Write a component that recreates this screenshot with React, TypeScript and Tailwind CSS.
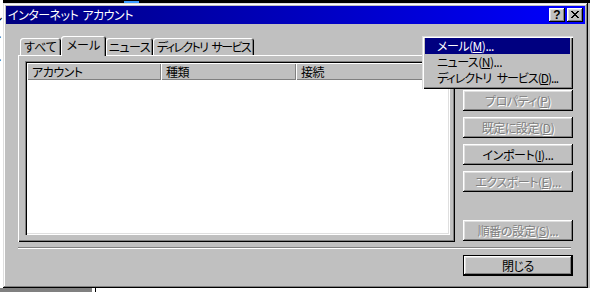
import React from "react";

const FONT = "font-['Noto_Sans_CJK_JP',sans-serif] [font-feature-settings:'palt'] whitespace-nowrap";
const RAISED =
  "shadow-[inset_-1px_-1px_#000,inset_1px_1px_#fff,inset_-2px_-2px_#808080,inset_2px_2px_#dfdfdf]";

function Btn({
  children,
  disabled,
  def,
  extra,
}: {
  children?: React.ReactNode;
  disabled?: boolean;
  def?: boolean;
  extra?: string;
}) {
  return (
    <div
      className={`flex h-[21px] w-[110px] shrink-0 items-center justify-center bg-[#c0c0c0] text-[12px] leading-none tracking-[-0.4px] ${RAISED} ${
        disabled ? "text-[#808080] [text-shadow:1px_1px_0_#fff]" : "text-black"
      } ${def ? "border border-black" : ""} ${extra ?? ""}`}
    >
      {children ? <span>{children}</span> : null}
    </div>
  );
}

function Tab({ children, w, selected }: { children: React.ReactNode; w: string; selected?: boolean }) {
  return (
    <div
      className={`flex shrink-0 items-center justify-center rounded-t-[3px] bg-[#c0c0c0] text-[12px] leading-none text-black shadow-[inset_1px_1px_#fff,inset_-1px_0_#000,inset_-2px_0_#808080] ${w} ${
        selected ? "relative z-10 -mb-px h-[20px] pb-[2px]" : "h-[17px]"
      }`}
    >
      <span>{children}</span>
    </div>
  );
}

function HeaderCell({ children, w }: { children: React.ReactNode; w: string }) {
  return (
    <div
      className={`flex h-full items-center bg-[#c0c0c0] pl-[5px] text-[12px] leading-none tracking-[-0.5px] text-black shadow-[inset_1px_1px_#fff,inset_-1px_-1px_#808080] ${w}`}
    >
      {children}
    </div>
  );
}

function CapBtn({ children }: { children: React.ReactNode }) {
  return (
    <div className={`flex h-[14px] w-[16px] items-center justify-center bg-[#c0c0c0] ${RAISED}`}>
      {children}
    </div>
  );
}

function U({ children }: { children: React.ReactNode }) {
  return <span className="underline underline-offset-[1px]">{children}</span>;
}

export default function App() {
  return (
    <div className={`relative flex h-[292px] w-[590px] flex-col overflow-hidden bg-white ${FONT}`}>
      {/* desktop strip above */}
      <div className="flex h-[3px] shrink-0">
        <div className="w-[3px] bg-white" />
        <div className="flex-1 bg-black">
          <div className="ml-[121px] mt-[1px] h-[2px] w-[15px] bg-[#3a9cff]" />
        </div>
      </div>

      <div className="flex h-[285px] shrink-0">
        {/* desktop strip at the left */}
        <div className="relative w-[3px] shrink-0 overflow-hidden bg-white text-[12px] leading-none text-black">
          <span className="absolute left-[-9px] top-[8px]">ル</span>
          <span className="absolute left-[-9px] top-[32px]">イ</span>
          <span className="absolute left-[-9px] top-[55px]">イ</span>
        </div>

        {/* dialog */}
        <div className="flex w-[585px] shrink-0 flex-col bg-[#c0c0c0] p-[3px] shadow-[inset_-1px_-1px_#000,inset_1px_1px_#dfdfdf,inset_-2px_-2px_#808080,inset_2px_2px_#fff]">
          <div className="flex h-[18px] shrink-0 items-center bg-linear-to-r from-[#000080] to-[#0000ff] pl-[2px] pr-[2px]">
            <span className="text-[12px] leading-none tracking-[-0.5px] text-white [word-spacing:2px]">
              インターネット アカウント
            </span>
            <div className="ml-auto flex gap-[2px]">
              <CapBtn>
                <span className="font-['Liberation_Sans',sans-serif] text-[12px] font-bold leading-none text-black">
                  ?
                </span>
              </CapBtn>
              <CapBtn>
                <svg width="8" height="7" viewBox="0 0 8 7" shapeRendering="crispEdges" className="-mt-px">
                  <path
                    d="M0 0h2v1H0zM6 0h2v1H6zM1 1h2v1H1zM5 1h2v1H5zM2 2h4v1H2zM3 3h2v1H3zM2 4h4v1H2zM1 5h2v1H1zM5 5h2v1H5zM0 6h2v1H0zM6 6h2v1H6z"
                    fill="#000"
                  />
                </svg>
              </CapBtn>
            </div>
          </div>

          <div className="flex pl-[12px]">
            {/* tabs + panel */}
            <div className="flex flex-col pt-[12px]">
              <div className="flex h-[19px] items-end pl-[2px]">
                <Tab w="w-[41px]">すべて</Tab>
                <Tab w="w-[45px]" selected>
                  メール
                </Tab>
                <Tab w="w-[47px]">
                  <span className="tracking-[-0.5px]">ニュース</span>
                </Tab>
                <Tab w="w-[101px]">
                  <span className="tracking-[-1.6px] [word-spacing:3px]">ディレクトリ サービス</span>
                </Tab>
              </div>
              <div className="h-[187px] w-[437px] bg-[#c0c0c0] pl-[7px] pt-[6px] shadow-[inset_1px_1px_#fff,inset_-1px_-1px_#000,inset_-2px_-2px_#808080]">
                <div className="flex h-[174px] w-[425px] flex-col bg-white p-[2px] shadow-[inset_1px_1px_#808080,inset_2px_2px_#000,inset_-1px_-1px_#fff,inset_-2px_-2px_#dfdfdf]">
                  <div className="flex h-[17px] shrink-0">
                    <HeaderCell w="w-[134px]">アカウント</HeaderCell>
                    <HeaderCell w="w-[135px]">種類</HeaderCell>
                    <HeaderCell w="flex-1">接続</HeaderCell>
                  </div>
                </div>
              </div>
            </div>

            {/* buttons (the first two lie under the open menu) */}
            <div className="ml-[8px] flex flex-col gap-[6px] pt-[12px]">
              <Btn />
              <Btn />
              <Btn disabled>
                プロパティ(<U>P</U>)
              </Btn>
              <Btn disabled>
                既定に設定(<U>D</U>)
              </Btn>
              <Btn>
                インポート(<U>I</U>)...
              </Btn>
              <Btn disabled>
                エクスポート(<U>E</U>)...
              </Btn>
              <Btn disabled extra="mt-[22px]">
                順番の設定(<U>S</U>)...
              </Btn>
            </div>
          </div>

          <div className="ml-[12px] mt-[5px] h-[2px] w-[553px] border-y border-t-[#808080] border-b-white" />

          <div className="mt-[6px] flex justify-end pr-[12px]">
            <Btn def>閉じる</Btn>
          </div>
        </div>

        <div className="w-[2px] shrink-0 bg-[#c0c0c0]" />
      </div>

      {/* desktop strip below */}
      <div className="flex h-[4px] shrink-0">
        <div className="w-[92px] bg-[#808080]" />
        <div className="w-[3px] bg-white" />
        <div className="w-[1px] bg-black" />
        <div className="flex-1 bg-white" />
      </div>

      {/* dropdown menu of the 追加 button */}
      <div className="absolute left-[422px] top-[36px] z-20 flex h-[53px] w-[151px] flex-col bg-[#c0c0c0] px-[3px] pt-[2px] text-[12px] leading-none shadow-[inset_1px_1px_#dfdfdf,inset_2px_2px_#fff,inset_-1px_-1px_#000,inset_-2px_-2px_#808080]">
        <div className="flex h-[16px] items-center bg-[#000080] pl-[12px] text-white">
          <span className="tracking-[-0.5px]">
            メール(<U>M</U>)...
          </span>
        </div>
        <div className="flex h-[16px] items-center pl-[12px] text-black">
          <span className="tracking-[-0.5px]">
            ニュース(<U>N</U>)...
          </span>
        </div>
        <div className="flex h-[16px] items-center pl-[12px] text-black">
          <span className="tracking-[-1px] [word-spacing:4px]">
            ディレクトリ サービス(<U>D</U>)...
          </span>
        </div>
      </div>
    </div>
  );
}
